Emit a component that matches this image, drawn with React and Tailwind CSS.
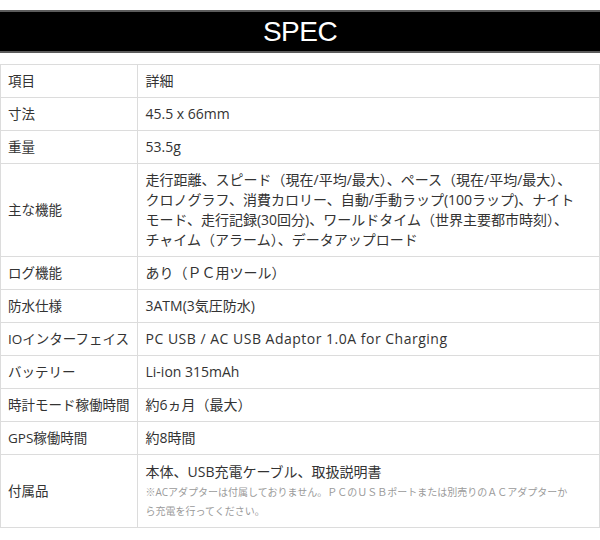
const rows = [
  { label: "項目", value: "詳細" },
  { label: "寸法", value: "45.5 x 66mm" },
  { label: "重量", value: "53.5g" },
  {
    label: "主な機能",
    value: [
      "走行距離、スピード（現在/平均/最大）、ペース（現在/平均/最大）、",
      "クロノグラフ、消費カロリー、自動/手動ラップ(100ラップ)、ナイト",
      "モード、走行記録(30回分)、ワールドタイム（世界主要都市時刻）、",
      "チャイム（アラーム）、データアップロード",
    ],
  },
  { label: "ログ機能", value: "あり（ＰＣ用ツール）" },
  { label: "防水仕様", value: "3ATM(3気圧防水)" },
  { label: "IOインターフェイス", value: "PC USB / AC USB Adaptor 1.0A for Charging", wide: true },
  { label: "バッテリー", value: "Li-ion 315mAh" },
  { label: "時計モード稼働時間", value: "約6ヵ月（最大）" },
  { label: "GPS稼働時間", value: "約8時間" },
];

export default function App() {
  return (
    <div
      className="w-[600px] h-[540px] bg-white text-[#333] overflow-hidden"
      style={{ fontFamily: '"Open Sans", "Noto Sans CJK JP", sans-serif' }}
    >
      <div className="mt-[10px] h-[43px] bg-black border-y-2 border-[#5c5c5c] flex items-center justify-center">
        <h1 className="text-white text-[28px] leading-none font-['Liberation_Sans',sans-serif] tracking-[-0.5px]">
          SPEC
        </h1>
      </div>

      <table className="mt-[11px] w-[600px] border-collapse leading-[20px]">
        <tbody>
          {rows.map((r) => (
            <tr key={r.label}>
              <td className="w-[136px] border border-[#dcdcdc] px-[7px] py-[6px] text-[13.5px] align-middle whitespace-nowrap">
                {r.label}
              </td>
              <td
                className={
                  r.wide
                    ? "border border-[#dcdcdc] px-[8px] py-[6px] text-[14px] tracking-[0.5px]"
                    : "border border-[#dcdcdc] px-[8px] py-[6px] text-[14px]"
                }
              >
                {Array.isArray(r.value)
                  ? r.value.map((line) => (
                      <div key={line} className="whitespace-nowrap">
                        {line}
                      </div>
                    ))
                  : r.value}
              </td>
            </tr>
          ))}
          <tr>
            <td className="w-[136px] border border-[#dcdcdc] px-[7px] py-[6px] text-[13.5px] align-middle">
              付属品
            </td>
            <td className="border border-[#dcdcdc] px-[8px] py-[6px]">
              <div className="text-[14px] leading-[22px]">本体、USB充電ケーブル、取扱説明書</div>
              <div className="text-[10px] leading-[19px] text-[#9a9a9a]">
                <div className="whitespace-nowrap">
                  ※ACアダプターは付属しておりません。ＰＣのＵＳＢポートまたは別売りのＡＣアダプターか
                </div>
                <div>ら充電を行ってください。</div>
              </div>
            </td>
          </tr>
        </tbody>
      </table>
    </div>
  );
}
